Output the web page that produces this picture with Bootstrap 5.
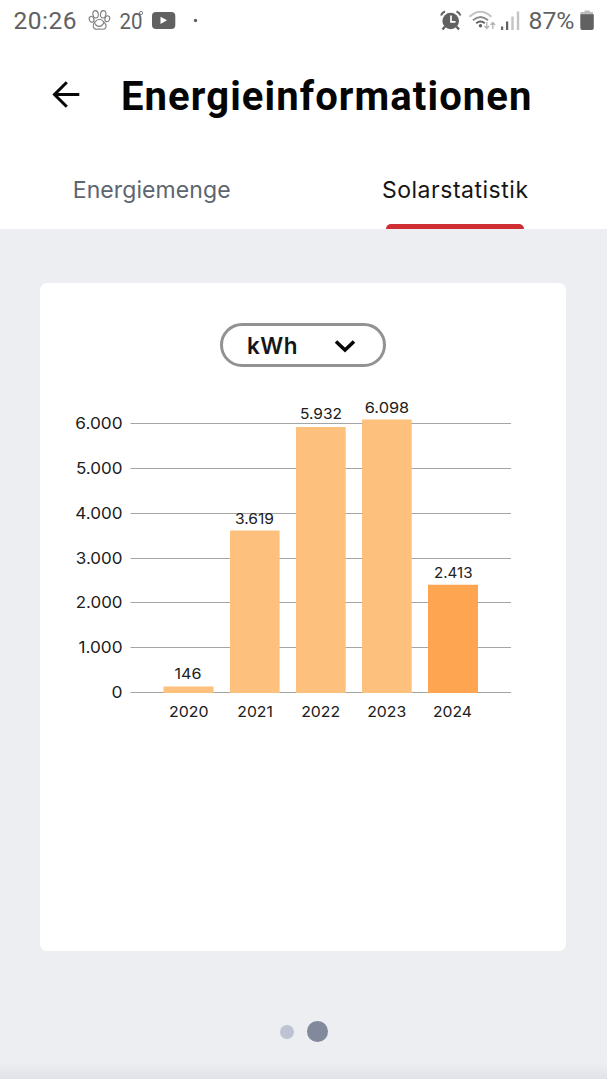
<!DOCTYPE html>
<html lang="de">
<head>
<meta charset="utf-8">
<meta name="viewport" content="width=device-width, initial-scale=1">
<title>Energieinformationen</title>
<link href="https://cdn.jsdelivr.net/npm/bootstrap@5.3.0/dist/css/bootstrap.min.css" rel="stylesheet">
<style>
body{background:#edeef2;font-family:Inter,sans-serif;color:#111;overflow:hidden}
.statusbar{height:40px;font-family:Roboto,sans-serif;color:#616161}
.statusbar svg,.titlebar svg{display:block}
.titlebar{height:110px;padding-top:14px}
.page-title{font:700 40px/80px Roboto,sans-serif;letter-spacing:1.1px;color:#050505;margin:0;padding-top:3px;white-space:nowrap}
.tabs{height:79px}
.tabs a{font-size:23px;line-height:80px;height:79px;color:#5d6570;letter-spacing:.1px;text-decoration:none;white-space:nowrap}
.tabs a.active{color:#161616;letter-spacing:.52px}
.marker{width:138px;height:5px;left:82.5px;background:#cf2e33;border-radius:5px 5px 0 0}
.panel{width:526px;height:668px;margin-top:54px;margin-left:40px;border-radius:7px;padding-top:40px}
.unit{width:166px;height:44px;border:3px solid #929292;border-radius:22px;padding:2px 27px 0 24px;font-size:22.5px;letter-spacing:.5px;font-weight:600;color:#161616;background:#fff}
.chart text{font-family:Inter,sans-serif;fill:#202020}
.pager{height:128px;padding-top:33px;padding-left:280px;gap:13px;background:linear-gradient(#edeef2 112px,#dfe2e7 128px)}
.dot{width:14px;height:14px;background:#bcc3d1}
.dot.on{width:20.5px;height:20.5px;background:#82899c}
</style>
</head>
<body>
<header class="bg-white">
  <div class="statusbar">
    <svg width="607" height="40" fill="#616161">
      <text x="13.5" y="29" font-size="24.5" textLength="63">20:26</text>
      <g fill="none" stroke="#7d7d7d" stroke-width="1.1">
        <ellipse cx="95.6" cy="14.3" rx="2.7" ry="3.7" transform="rotate(-8 95.6 14.3)"/>
        <ellipse cx="103.2" cy="14.3" rx="2.7" ry="3.7" transform="rotate(8 103.2 14.3)"/>
        <ellipse cx="91.6" cy="19.3" rx="2.3" ry="3" transform="rotate(-20 91.6 19.3)"/>
        <ellipse cx="107.3" cy="18.8" rx="2.3" ry="3" transform="rotate(20 107.3 18.8)"/>
        <path d="M99.500 19.200C97 19.200 96 21 94.500 22.500C92 25 93.200 29.200 96.500 29.200C98.500 29.200 101 28.700 102.500 29.200C106 29.800 107.200 25.500 104.800 23C103 21 102.300 19.200 99.500 19.200ZM95 23.500C97 27.500 102 27.500 103.800 22.500"/>
      </g>
      <text x="119.500" y="29.300" font-size="21.500" textLength="23" lengthAdjust="spacingAndGlyphs">20</text>
      <circle cx="141" cy="13" r="1.600" fill="none" stroke="#717171" stroke-width=".9"/>
      <rect x="152" y="12" width="23.300" height="17" rx="4"/>
      <path d="M160.500 16.700v7.200l6.500-3.600z" fill="#fff"/>
      <circle cx="195.500" cy="20.500" r="1.700"/>
      <circle cx="450.700" cy="21" r="8.300"/>
      <path d="M445 26.500l-2.500 3M456.500 26.500l2.500 3" stroke="#616161" stroke-width="2.300"/>
      <path d="M441 15.500q1-3 4-4M460.500 15.500q-1-3-4-4" fill="none" stroke="#616161" stroke-width="2"/>
      <path d="M451 15.500v6.300h4.500" fill="none" stroke="#fff" stroke-width="1.700"/>
      <g fill="none" stroke-width="2">
        <path d="M469.500 16.800q11-10 22 0" stroke="#c4c4c4"/>
        <path d="M473 20.300q7.500-6.500 15 0" stroke="#8b8b8b"/>
        <path d="M476.200 23.300q4.300-3.500 8.500 0" stroke="#616161"/>
        <path d="M486.800 22v6.500m-2.300-2.500l2.300 2.500 2.300-2.500M492.800 29v-6.500m-2.300 2.500l2.300-2.500 2.300 2.500" stroke="#b5b5b5" stroke-width="1.400"/>
      </g>
      <circle cx="480.500" cy="25.700" r="1.700"/>
      <path d="M501 26.500h2.200v3.500H501zM506 21.500h2.200V30H506z"/>
      <path d="M511.300 16.500h2.400V30h-2.400zM516.800 11.500h2.400V30h-2.400z" fill="#c4c4c4"/>
      <text x="528.500" y="29" font-size="24" textLength="46" lengthAdjust="spacingAndGlyphs">87%</text>
      <path d="M584.500 10.500h5.500V12h3v3h-12.500v-3h4z" fill="#bdbdbd"/>
      <path d="M580.300 14.300h13.500V28q0 2-2 2h-9.500q-2 0-2-2z"/>
    </svg>
  </div>
  <div class="titlebar d-flex align-items-start">
    <svg width="121" height="80" fill="none" stroke="#080808" stroke-width="3"><path d="M79.300 40.500H54.500M66.800 28.300L54.500 40.500l12.300 12.200"/></svg>
    <h1 class="page-title">Energieinformationen</h1>
  </div>
  <nav class="tabs row g-0 text-center">
    <a class="col-6" href="#">Energiemenge</a>
    <a class="col-6 active position-relative" href="#">Solarstatistik<span class="marker position-absolute bottom-0"></span></a>
  </nav>
</header>
<main>
  <section class="panel bg-white">
    <button class="unit d-flex align-items-center justify-content-between mx-auto">kWh
      <svg width="22" height="15" fill="none" stroke="#080808" stroke-width="3.6"><path d="M2 2.500l9 8.500 9-8.500"/></svg>
    </button>
    <svg class="chart d-block" width="526" height="380" viewBox="40 367 526 380">
      <path d="M130.500 423.500H511M130.500 468.500H511M130.500 513.500H511M130.500 558.500H511M130.500 602.500H511M130.500 647.500H511M130.500 692.500H511" stroke="#a5a5a5"/>
      <g fill="#fdc17d">
        <path d="M163.500 686.500h50v6.500h-50zM230 530.500h49.600V693H230zM296 427h49.700v266H296zM362 419.500h49.700V693H362z"/>
        <path d="M428 584.700h50V693h-50z" fill="#fea551"/>
      </g>
      <g font-size="16">
        <text x="75.300" y="428.600" textLength="47.200" lengthAdjust="spacingAndGlyphs">6.000</text>
        <text x="76" y="474" textLength="46.500" lengthAdjust="spacingAndGlyphs">5.000</text>
        <text x="75.300" y="519" textLength="47.200" lengthAdjust="spacingAndGlyphs">4.000</text>
        <text x="75.800" y="563.600" textLength="46.700" lengthAdjust="spacingAndGlyphs">3.000</text>
        <text x="75.800" y="608.400" textLength="46.700" lengthAdjust="spacingAndGlyphs">2.000</text>
        <text x="78.500" y="652.900" textLength="44" lengthAdjust="spacingAndGlyphs">1.000</text>
        <text x="111.500" y="698" textLength="11" lengthAdjust="spacingAndGlyphs">0</text>
      </g>
      <g font-size="14.500">
        <text x="174.500" y="679" textLength="27" lengthAdjust="spacingAndGlyphs">146</text>
        <text x="235" y="524" textLength="39" lengthAdjust="spacingAndGlyphs">3.619</text>
        <text x="300" y="419" textLength="42" lengthAdjust="spacingAndGlyphs">5.932</text>
        <text x="364.800" y="412.500" textLength="44.400" lengthAdjust="spacingAndGlyphs">6.098</text>
        <text x="434" y="577.700" textLength="38.500" lengthAdjust="spacingAndGlyphs">2.413</text>
        <text x="169" y="716.800" textLength="39.500" lengthAdjust="spacingAndGlyphs">2020</text>
        <text x="237.300" y="716.800" textLength="35.500" lengthAdjust="spacingAndGlyphs">2021</text>
        <text x="301.200" y="716.800" textLength="39" lengthAdjust="spacingAndGlyphs">2022</text>
        <text x="367.200" y="716.800" textLength="39" lengthAdjust="spacingAndGlyphs">2023</text>
        <text x="433" y="716.800" textLength="39" lengthAdjust="spacingAndGlyphs">2024</text>
      </g>
    </svg>
  </section>
  <div class="pager d-flex align-items-center">
    <span class="dot rounded-circle"></span><span class="dot on rounded-circle"></span>
  </div>
</main>
<script src="https://cdn.jsdelivr.net/npm/bootstrap@5.3.0/dist/js/bootstrap.bundle.min.js"></script>
</body>
</html>
